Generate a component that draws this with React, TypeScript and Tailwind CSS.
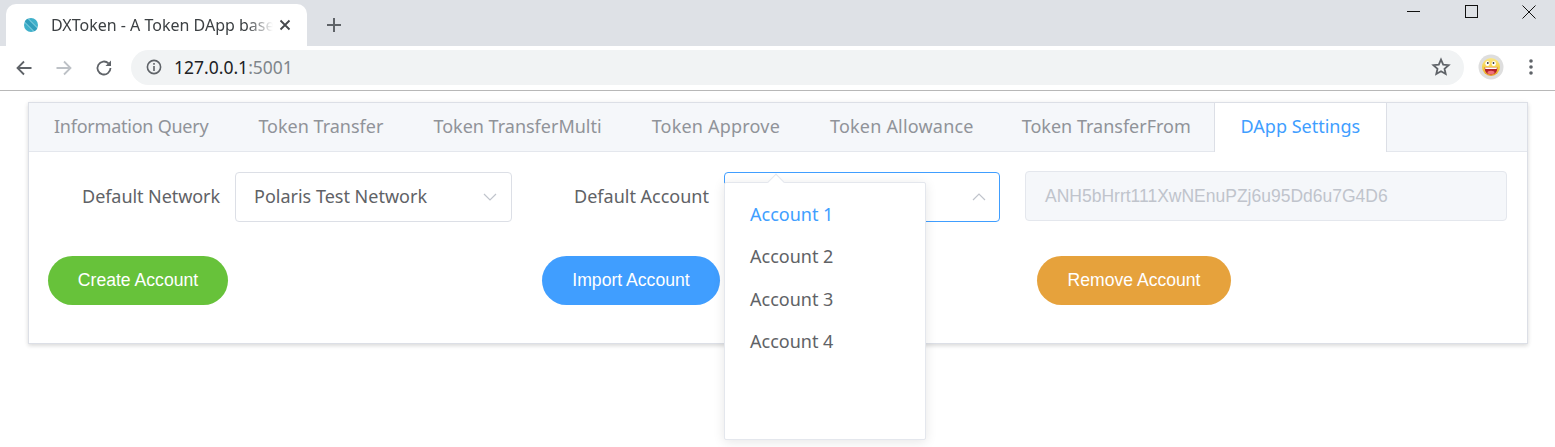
import React from "react";

const YH = "font-['Noto_Sans','Liberation_Sans',sans-serif]";
const tabs: [string, string][] = [
  ["Information Query", "tracking-[-0.24px] pr-[25px]"],
  ["Token Transfer", "pr-[25px]"],
  ["Token TransferMulti", "pr-[25px]"],
  ["Token Approve", "tracking-[0.2px] pr-[25px]"],
  ["Token Allowance", "tracking-[0.2px] pr-[23px]"],
  ["Token TransferFrom", "pr-[23px]"],
];

function Chevron({ up, className }: { up?: boolean; className?: string }) {
  return (
    <svg width="16" height="10" viewBox="0 0 16 10" className={className} fill="none" stroke="#c0c4cc" strokeWidth="1.2">
      {up ? <path d="M2 8 L8 2 L14 8" /> : <path d="M2 2 L8 8 L14 2" />}
    </svg>
  );
}

function Browser() {
  return (
    <div className="h-[91px] flex flex-col border-b border-[#b8b8b8] font-['Liberation_Sans',sans-serif]">
      <div className="h-[46px] bg-[#dee1e6] flex items-end relative">
        <div className="ml-[6px] w-[301px] h-[42px] bg-white rounded-t-[10px] flex items-center relative">
          <svg width="16" height="16" viewBox="0 0 16 16" className="ml-[17px] mt-[-1px]">
            <circle cx="8" cy="8" r="7" fill="#3fb0ca" />
            <path d="M1.5 5 L11 14.5" stroke="#b8e2ec" strokeWidth="0.7" />
            <path d="M5 1.5 L14.5 11" stroke="#b8e2ec" strokeWidth="0.7" />
            <path d="M3 3 L13 13" stroke="#2f9dbb" strokeWidth="3.6" />
          </svg>
          <span className={`ml-[12px] text-[16px] text-[#3c4043] w-[222px] mt-[-1px] whitespace-nowrap ${YH} [mask-image:linear-gradient(to_right,black_88%,transparent)]`}>
            DXToken - A Token DApp base
          </span>
          <svg width="12" height="12" viewBox="0 0 12 12" className="ml-[6px] mt-[-1px]" stroke="#45484c" strokeWidth="1.8">
            <path d="M1.5 1.5 L10.5 10.5 M10.5 1.5 L1.5 10.5" />
          </svg>
        </div>
        <svg width="16" height="16" viewBox="0 0 16 16" className="ml-[19px] mb-[13px]" stroke="#5f6368" strokeWidth="2">
          <path d="M8 1 V15 M1 8 H15" />
        </svg>
        <div className="absolute right-0 top-0 flex items-start">
          <svg width="14" height="14" viewBox="0 0 14 14" className="mr-[44px] mt-[4px]" stroke="#111" strokeWidth="1"><path d="M0 7.5 H13" /></svg>
          <svg width="14" height="14" viewBox="0 0 14 14" className="mr-[43px] mt-[4px]" fill="none" stroke="#111" strokeWidth="1"><rect x="0.5" y="1.5" width="12" height="12" /></svg>
          <svg width="14" height="14" viewBox="0 0 14 14" className="mr-[19px] mt-[5px]" stroke="#111" strokeWidth="1"><path d="M0.5 0.5 L13.5 13.5 M13.5 0.5 L0.5 13.5" /></svg>
        </div>
      </div>
      <div className="h-[44px] bg-white flex items-center">
        <svg width="18" height="18" viewBox="0 0 18 18" className="ml-[15px]" fill="none" stroke="#5f6368" strokeWidth="1.8"><path d="M16.5 9 H2.5 M9 2.5 L2.5 9 L9 15.5" /></svg>
        <svg width="18" height="18" viewBox="0 0 18 18" className="ml-[22px]" fill="none" stroke="#bdc1c6" strokeWidth="1.8"><path d="M1.5 9 H15.5 M9 2.5 L15.5 9 L9 15.5" /></svg>
        <svg width="18" height="18" viewBox="0 0 18 18" className="ml-[22px]" fill="none" stroke="#5f6368" strokeWidth="1.8">
          <path d="M15.5 9 A6.5 6.5 0 1 1 13.5 4.3" />
          <path d="M16 1.5 V7 H10.5 Z" fill="#5f6368" stroke="none" />
        </svg>
        <div className="ml-[18px] w-[1333px] h-[35px] mt-[-2px] rounded-full bg-[#f1f3f4] flex items-center">
          <svg width="16" height="16" viewBox="0 0 16 16" className="ml-[15px]" fill="none" stroke="#5f6368" strokeWidth="1.6">
            <circle cx="8" cy="8" r="6.6" />
            <path d="M8 7 V12 M8 4 V5.8" />
          </svg>
          <span className={`ml-[12px] text-[17.5px] ${YH}`}>
            <span className="text-[#202124]">127.0.0.1</span><span className="text-[#80868b]">:5001</span>
          </span>
          <svg width="20" height="20" viewBox="0 0 20 20" className="ml-auto mr-[13px]" fill="none" stroke="#5f6368" strokeWidth="1.8">
            <path d="M10 2.6 L12.2 7.6 L17.6 8.1 L13.5 11.7 L14.7 17 L10 14.2 L5.3 17 L6.5 11.7 L2.4 8.1 L7.8 7.6 Z" />
          </svg>
        </div>
        <svg width="26" height="26" viewBox="0 0 26 26" className="ml-[14px] mt-[-2px]">
          <defs>
            <linearGradient id="face" x1="0" y1="0" x2="0" y2="1">
              <stop offset="0" stopColor="#fbe88a" />
              <stop offset="0.55" stopColor="#f5cf45" />
              <stop offset="1" stopColor="#e89a2a" />
            </linearGradient>
          </defs>
          <circle cx="13" cy="13" r="12.5" fill="#dedede" />
          <circle cx="13" cy="13" r="9" fill="url(#face)" />
          <ellipse cx="9.5" cy="9.5" rx="2.2" ry="2.6" fill="#fff" />
          <ellipse cx="15.8" cy="9.5" rx="2.2" ry="2.6" fill="#fff" />
          <circle cx="9.8" cy="9" r="0.9" fill="#333" />
          <circle cx="15.5" cy="9" r="0.9" fill="#333" />
          <path d="M6.5 13.5 H19.5 Q19 20.5 13 20.5 Q7 20.5 6.5 13.5 Z" fill="#b3202a" />
          <path d="M7 13.5 H19 L18.6 15 H7.4 Z" fill="#fff" />
          <ellipse cx="13" cy="18.5" rx="3.5" ry="1.8" fill="#f0727c" />
        </svg>
        <svg width="4" height="16" viewBox="0 0 4 16" className="ml-[25px] mt-[-3px]" fill="#5f6368">
          <circle cx="2" cy="2" r="1.8" /><circle cx="2" cy="8" r="1.8" /><circle cx="2" cy="14" r="1.8" />
        </svg>
      </div>
    </div>
  );
}

function Btn({ children, className }: { children: React.ReactNode; className: string }) {
  return (
    <div className={`h-[49px] rounded-full text-white text-[17.6px] flex items-center justify-center font-['Liberation_Sans',sans-serif] ${className}`}>
      {children}
    </div>
  );
}

export default function App() {
  return (
    <div className="w-[1555px] h-[447px] bg-white overflow-hidden relative">
      <Browser />
      <div className="ml-[28px] mt-[11px] w-[1500px] h-[242px] bg-white border border-[#dcdfe6] shadow-[0_2px_4px_0_rgba(0,0,0,0.12),0_0_6px_0_rgba(0,0,0,0.04)]">
        <div className={`h-[49px] bg-[#f5f7fa] border-b border-[#e4e7ed] flex text-[18px] text-[#909399] whitespace-nowrap ${YH}`}>
          {tabs.map(([t, tr]) => (
            <div key={t} className={`shrink-0 pl-[25px] flex items-center h-[48px] pb-[2px] ${tr}`}>{t}</div>
          ))}
          <div className="shrink-0 w-[173px] h-[49px] pb-[2px] bg-white border-x border-[#dcdfe6] text-[#409eff] flex items-center justify-center">DApp Settings</div>
        </div>
        <div className={`flex items-start pt-[20px] text-[18px] text-[#606266] ${YH}`}>
          <div className="w-[191px] text-right leading-[48px] tracking-[-0.07px]">Default Network</div>
          <div className="ml-[15px] w-[277px] h-[50px] border border-[#dcdfe6] rounded-[4px] flex items-center pl-[18px] pb-[2px]">
            Polaris Test Network
            <Chevron className="ml-auto mr-[13px] mt-[2px]" />
          </div>
          <div className="w-[197px] text-right leading-[48px]">Default Account</div>
          <div className="ml-[15px] w-[276px] h-[50px] border border-[#409eff] rounded-[4px] flex items-center justify-end pr-[12px]">
            <Chevron up />
          </div>
          <div className="ml-[25px] mt-[-1px] w-[482px] h-[50px] bg-[#f5f7fa] border border-[#e4e7ed] rounded-[4px] flex items-center pl-[19px] text-[#c0c4cc] text-[17.5px] font-['Liberation_Sans',sans-serif]">
            ANH5bHrrt111XwNEnuPZj6u95Dd6u7G4D6
          </div>
        </div>
        <div className="flex mt-[34px] pl-[19px]">
          <Btn className="w-[180px] bg-[#67c23a]">Create Account</Btn>
          <Btn className="ml-[314px] w-[178px] bg-[#409eff]">Import Account</Btn>
          <Btn className="ml-[317px] w-[194px] bg-[#e6a23c]">Remove Account</Btn>
        </div>
      </div>

      <div className={`absolute left-[724px] top-[182px] w-[202px] h-[258px] bg-white border border-[#e4e7ed] rounded-[2px] shadow-[0_2px_12px_0_rgba(0,0,0,0.1)] pt-[10px] text-[18px] text-[#606266] ${YH}`}>
        <div className="absolute left-[45px] top-[-7px] w-[12px] h-[12px] bg-white rotate-45 border-l border-t border-[#e4e7ed]" />
        <div className="relative">
          {["Account 1", "Account 2", "Account 3", "Account 4"].map((a, i) => (
            <div key={a} className={`h-[42.5px] flex items-center pl-[25px] ${i === 0 ? "text-[#409eff]" : ""}`}>{a}</div>
          ))}
        </div>
      </div>
    </div>
  );
}
